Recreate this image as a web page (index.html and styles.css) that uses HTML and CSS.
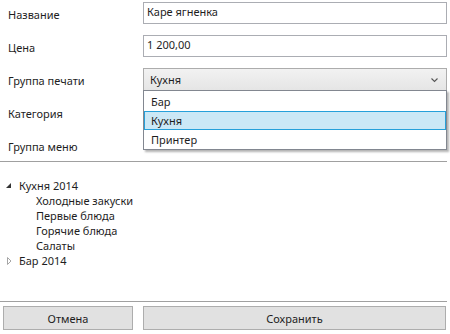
FILE: index.html
```html
<!DOCTYPE html>
<html lang="ru">
  <head>
    <meta charset="UTF-8" />
    <meta name="viewport" content="width=device-width, initial-scale=1.0" />
    <title>Блюдо</title>
    <link rel="stylesheet" href="styles.css">
  </head>
  <body>
    <div class="form">
      <div class="row">
        <label>Название</label>
        <div class="textbox">Каре ягненка</div>
      </div>
      <div class="row">
        <label>Цена</label>
        <div class="textbox">1 200,00</div>
      </div>
      <div class="row">
        <label>Группа печати</label>
        <div class="combo">
          <span>Кухня</span>
          <svg class="chevron" width="7" height="5" viewBox="0 0 7 5">
            <path d="M0.5 0.5 L3.5 3.5 L6.5 0.5" fill="none" stroke="#555" stroke-width="1.1" />
          </svg>
          <ul class="dropdown">
            <li>Бар</li>
            <li class="selected">Кухня</li>
            <li>Принтер</li>
          </ul>
        </div>
      </div>
      <div class="row">
        <label>Категория</label>
      </div>
      <div class="row short">
        <label>Группа меню</label>
      </div>
    </div>

    <div class="tree">
      <div class="node">
        <svg class="arrow" width="8" height="8" viewBox="0 0 8 8">
          <path d="M6 1 L6 6 L1 6 Z" fill="#333" />
        </svg>
        Кухня 2014
      </div>
      <div class="children">
        <div class="leaf">Холодные закуски</div>
        <div class="leaf">Первые блюда</div>
        <div class="leaf">Горячие блюда</div>
        <div class="leaf">Салаты</div>
      </div>
      <div class="node">
        <svg class="arrow" width="8" height="8" viewBox="0 0 8 8">
          <path d="M2.5 0.5 L6 4 L2.5 7.5 Z" fill="none" stroke="#a6a6a6" stroke-width="1" />
        </svg>
        Бар 2014
      </div>
    </div>

    <div class="buttons">
      <button class="cancel">Отмена</button>
      <button class="save">Сохранить</button>
    </div>
  </body>
</html>
```

FILE: styles.css
```css
body {
  font-family: "Noto Sans", "Open Sans", sans-serif;
  font-size: 11px;
  color: #1e1e1e;
  background: #fff;
  margin: 0;
  padding: 0;
  width: 450px;
}
.form {
  height: 161px;
  border-bottom: 1px solid #a0a0a0;
  width: 447px;
}
.row {
  display: grid;
  grid-template-columns: 143px 304px;
  height: 33px;
}
.row.short {
  height: 29px;
}
.row label {
  padding-left: 8px;
  padding-top: 7px;
  line-height: 16px;
}
.textbox {
  margin-top: 2px;
  height: 22px;
  box-sizing: border-box;
  border: 1px solid #abadb3;
  padding: 1px 3px;
  line-height: 15px;
}
.combo {
  position: relative;
  margin-top: 2px;
  height: 23px;
  box-sizing: border-box;
  border: 1px solid #acacac;
  background: linear-gradient(#f2f2f2, #e5e5e5);
  display: flex;
  align-items: center;
  justify-content: space-between;
  padding: 0 8px 0 6px;
}
.chevron {
  margin-top: 1px;
}
.dropdown {
  position: absolute;
  left: -1px;
  right: -1px;
  top: 21px;
  margin: 0;
  padding: 1px 0 0;
  list-style: none;
  background: #fff;
  border: 1px solid #828790;
  box-shadow: 2px 2px 2px rgba(0, 0, 0, 0.3);
  z-index: 2;
}
.dropdown li {
  height: 19px;
  line-height: 17px;
  padding: 0 6px;
  border: 1px solid transparent;
  box-sizing: border-box;
}
.dropdown li.selected {
  background: #cbe8f6;
  border-color: #26a0da;
}
.tree {
  height: 140px;
  box-sizing: border-box;
  padding-top: 16px;
  border-bottom: 1px solid #a0a0a0;
  width: 447px;
}
.node {
  display: flex;
  align-items: center;
  line-height: 15px;
  padding-left: 5px;
}
.arrow {
  margin-right: 6px;
}
.children {
  padding-left: 36px;
}
.leaf {
  line-height: 15px;
}
.buttons {
  display: flex;
  gap: 10px;
  padding: 4px 4px 0 3px;
}
.buttons button {
  font-family: inherit;
  font-size: 11px;
  color: #1e1e1e;
  height: 24px;
  background: #e1e1e1;
  border: 1px solid #adadad;
  padding: 0;
}
.cancel {
  width: 130px;
}
.save {
  flex: 1;
}
```
